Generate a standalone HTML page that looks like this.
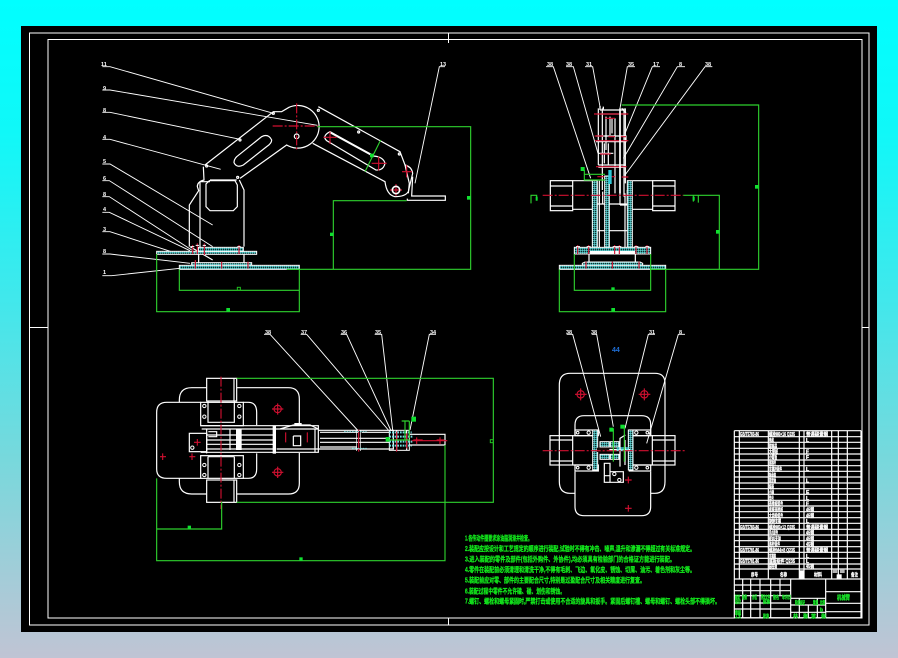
<!DOCTYPE html>
<html lang="zh">
<head>
<meta charset="utf-8">
<title>CAD</title>
<style>
html,body{margin:0;padding:0;width:898px;height:658px;overflow:hidden;background:linear-gradient(180deg,#00ffff 0%,#10f8f8 20%,#40e8ec 45%,#78d8dc 70%,#a4ccd8 88%,#c0c4d4 100%)}
svg{position:absolute;left:0;top:0;display:block}
.w{fill:none;stroke:#fff;stroke-width:3.6}
.t{fill:none;stroke:#fff;stroke-width:2.8}
.g{fill:none;stroke:#2ed02e;stroke-width:3.4}
.r{fill:none;stroke:#d01030;stroke-width:3.4}
.d{fill:none;stroke:#d01030;stroke-width:3.4;stroke-dasharray:30 6 6 6}
.gs{fill:#10e030}
.h{fill:url(#hatch);stroke:#fff;stroke-width:3}
.n{font-family:"Liberation Sans","Noto Sans CJK SC",sans-serif;font-size:5.5px;font-weight:bold;fill:#fff}
.note{font-family:"Liberation Sans","Noto Sans CJK SC",sans-serif;font-size:7px;font-weight:bold;fill:#12e81c;stroke:#12e81c;stroke-width:.3}
.c{font-family:"Liberation Sans","Noto Sans CJK SC",sans-serif;font-size:5px;font-weight:bold;fill:#fff;stroke:#fff;stroke-width:.3}
.cg{font-family:"Liberation Sans","Noto Sans CJK SC",sans-serif;font-size:5px;font-weight:bold;fill:#18e028;stroke:#18e028;stroke-width:.35}
</style>
</head>
<body>
<svg width="898" height="658" viewBox="0 0 898 658" xmlns="http://www.w3.org/2000/svg">
<defs>
<pattern id="hatch" width="6" height="6" patternUnits="userSpaceOnUse">
<rect width="6" height="6" fill="#3c9c9c"/>
<rect x="0" y="0" width="3" height="3" fill="#60c8c8"/>
<rect x="3" y="3" width="3" height="3" fill="#102c2c"/>
</pattern>
</defs>
<rect x="21" y="26" width="856" height="606" fill="#000"/>
<rect x="29.5" y="33" width="839.5" height="592" fill="none" stroke="#fff" stroke-width="1"/>
<rect x="48" y="39.500" width="814" height="578.500" fill="none" stroke="#fff" stroke-width="1"/>
<path d="M448.500 33V43M448.500 618V625M29.500 327.500H48M862 327.500H869" stroke="#fff" stroke-width="1" fill="none"/>

<!-- SIDE VIEW -->
<g transform="translate(90,50) scale(.33333)">
<path class="t" d="M37 50H60L550 190M37 120H60L682 226M37 187H60L450 268M37 268H60L392 358M37 342H60L368 525M37 392H58L368 590M37 440H58L305 600M37 487H58L300 602M37 545H60L250 607M37 612H60L300 640M37 677H65L270 655M1065 50H1048L975 400"/>
<path class="w" d="M345 345L550 185H575L597 172A64 64 0 1 1 590 285L450 385"/>
<path class="w" d="M440 320L515 260Q535 250 545 270Q545 280 530 290L460 345Q440 355 432 338Q432 328 440 320Z"/>
<circle class="w" cx="620" cy="259" r="7"/>
<circle class="w" cx="550" cy="190" r="3"/><circle class="w" cx="450" cy="270" r="3"/><circle class="w" cx="350" cy="348" r="3"/><circle class="w" cx="443" cy="382" r="3"/><circle class="w" cx="685" cy="181" r="3"/><circle class="w" cx="806" cy="246" r="3"/><circle class="w" cx="928" cy="312" r="3"/>
<path class="w" d="M685 170L930 305L945 345Q965 350 968 370L955 425Q945 440 915 440Q890 435 885 395L668 280"/>
<path class="w" d="M945 345L958 400L955 430M720 245L850 318Q880 320 885 340Q880 362 858 360L710 272Q695 258 720 245Z"/>
<path d="M722 248L845 315" stroke="#fff" stroke-width="6" fill="none"/>
<path class="w" d="M968 380L965 438H1066V451H952V446"/>
<path class="w" d="M340 350L342 390Q322 395 322 410L326 422L298 465V590M330 395H360M330 395V600M448 390L462 420V590M440 390H360"/>
<path class="w" d="M358 392H435L442 405V470L430 482H360L348 470V402Z"/>
<path class="w" d="M326 612V640M462 612V640M368 630L300 590"/>
<rect class="h" x="200" y="604" width="300" height="9"/>
<rect class="h" x="325" y="592" width="135" height="12"/>
<rect class="h" x="305" y="638" width="180" height="12"/>
<rect class="h" x="268" y="646" width="360" height="12"/>
<path class="r" d="M308 585V612M322 580V612M343 580V615M447 585V612M316 630V656M395 635V656M474 635V656"/>
<path d="M303 590H313M317 586H327M338 586H348M442 590H452" stroke="#fff" stroke-width="3" fill="none"/>
<path class="d" d="M620 160V300M548 228H684"/>
<path class="r" d="M700 262H740M720 245V282M845 340H890M866 320V362M936 365H966M950 345V382M900 420H936M918 402V438"/>
<circle cx="918" cy="420" r="11" fill="none" stroke="#fff" stroke-width="5"/>
<path class="g" d="M682 230H1142V658H590M730 658V452H950M268 658V721H628V658M200 612V785H628V658M872 270L825 365"/>
<rect class="gs" x="1131" y="438" width="11" height="11"/><rect class="gs" x="720" y="548" width="10" height="10"/><rect class="gs" x="409" y="774" width="11" height="11"/><rect class="gs" x="840" y="311" width="11" height="11"/>
<rect x="442" y="712" width="9" height="9" fill="none" stroke="#20c020" stroke-width="3"/>
</g>
<g class="n">
<text x="101" y="66">11</text><text x="103" y="90">9</text><text x="103" y="112">8</text><text x="103" y="139">4</text><text x="103" y="163">5</text><text x="103" y="180">6</text><text x="103" y="196">8</text><text x="103" y="211">4</text><text x="103" y="231">3</text><text x="103" y="253">8</text><text x="103" y="274">1</text><text x="440" y="66">13</text>
</g>

<!-- FRONT VIEW -->
<g transform="translate(520,50) scale(.33333)">
<path class="t" d="M78 50H100L212 385M138 50H160L234 310M195 50H218L240 170M345 50H322L300 175M420 50H397L315 250M495 50H472L310 325M577 50H555L315 375"/>
<path class="w" d="M235 175V345M247 175V420M258 200V300M270 200V255M285 205V430M300 175V465M312 175V440M316 175V400M240 180H312V192H240M228 258H318V275H228M235 345H316V352H235M235 310H280M300 465H322V420M238 420V462M248 425V462M265 280V345M276 205V250M253 280V340"/>
<path d="M240 168V180M250 170V178M305 175L318 188" stroke="#fff" stroke-width="4" fill="none"/>
<path class="r" d="M222 192H325M255 205H285M224 258H250M265 260H285M300 260H318M225 272H325M240 312H272M228 350H320M232 380H285M305 381H325"/>
<path d="M300 175V430" stroke="#fff" stroke-width="5" fill="none"/>
<rect class="w" x="91" y="392" width="67" height="90"/><path class="w" d="M91 408H158M91 468H158M158 392H220M158 478H220M338 392H398M338 478H398"/>
<rect class="w" x="398" y="392" width="67" height="90"/><path class="w" d="M398 408H465M398 468H465"/>
<rect class="h" x="217" y="392" width="15" height="212"/>
<rect class="h" x="254" y="378" width="14" height="226"/>
<rect class="h" x="322" y="392" width="15" height="212"/>
<path class="w" d="M232 462H254M268 462H322M232 542H254M268 542H322M238 392V598M315 430V598"/>
<rect x="265" y="360" width="10" height="42" fill="#30c8d8"/>
<rect class="h" x="163" y="592" width="229" height="20"/>
<rect x="210" y="603" width="135" height="10" fill="#fff"/>
<path class="w" d="M207 612V636M346 612V636"/>
<path class="h" d="M187 648V640L195 636H360L368 640V648Z"/>
<rect class="h" x="118" y="646" width="319" height="12"/>
<path class="r" d="M173 585V612M206 585V612M284 585V612M298 585V612M348 585V612M381 585V612M198 635V656M277 635V656M357 635V656"/>
<path d="M168 590H180M200 590H212M278 590H304M343 590H355M376 590H388" stroke="#fff" stroke-width="3" fill="none"/>
<path class="d" d="M68 436H490"/>
<path class="g" d="M305 165H716V658H392M490 436H598V658M163 612V721H392V612M118 658V785H437V658M193 360V392M193 373H255M193 390H255M33 460V436H50V452M520 436V455M535 436V458"/>
<rect class="gs" x="47" y="440" width="6" height="12"/><rect class="gs" x="518" y="440" width="6" height="12"/>
<rect class="gs" x="705" y="405" width="11" height="11"/><rect class="gs" x="588" y="540" width="11" height="11"/><rect class="gs" x="274" y="712" width="10" height="9"/><rect class="gs" x="274" y="774" width="11" height="11"/><rect class="gs" x="182" y="351" width="12" height="12"/>
</g>
<g class="n">
<text x="547" y="66">38</text><text x="566" y="66">38</text><text x="586" y="66">31</text><text x="628" y="66">35</text><text x="653" y="66">17</text><text x="679" y="66">8</text><text x="705" y="66">38</text>
</g>

<!-- TOP VIEW -->
<g transform="translate(140,325) scale(.33333)">
<path class="t" d="M372 28H390L655 318M482 28H500L745 315M602 28H620L752 315M704 28H725L758 315M888 28H868L810 315"/>
<path class="w" d="M182 232H80Q50 232 50 262V432Q50 460 80 460H182M310 232H325Q350 232 350 262V300M310 460H325Q350 460 350 432V385"/>
<path class="w" d="M118 232V225Q118 188 155 188H200M290 188H445Q478 188 478 222V302M478 384V475Q478 507 445 507H290M200 507H155Q118 507 118 470V460"/>
<rect class="w" x="200" y="160" width="90" height="68"/><rect class="w" x="200" y="465" width="90" height="67"/>
<path class="w" d="M282 160V228M282 465V532"/>
<rect class="w" x="182" y="232" width="128" height="70"/><rect class="w" x="182" y="392" width="128" height="68"/>
<path class="w" d="M204 228V292H283V228M204 395V460M283 395V460M204 395H283"/>
<g fill="none" stroke="#fff" stroke-width="3"><circle cx="193" cy="243" r="5"/><circle cx="193" cy="275" r="5"/><circle cx="298" cy="243" r="5"/><circle cx="298" cy="275" r="5"/><circle cx="193" cy="420" r="5"/><circle cx="193" cy="450" r="5"/><circle cx="298" cy="420" r="5"/><circle cx="298" cy="450" r="5"/><circle cx="157" cy="368" r="5"/></g>
<circle class="r" cx="413" cy="252" r="11"/><circle class="r" cx="413" cy="442" r="11"/>
<path class="r" d="M396 252H430M413 235V269M396 442H430M413 425V459M60 395H78M68 385V405M148 395H166M156 385V405M162 352H182M172 342V362"/>
<rect class="w" x="148" y="325" width="52" height="55"/>
<path class="w" d="M182 302H535V382H182M185 312H535M200 330H400M200 345H400M200 358H400M200 372H400M410 372H535M200 312V385M205 320H230V335H205M270 312V375"/>
<rect x="288" y="312" width="17" height="63" fill="#fff"/><rect x="398" y="302" width="10" height="84" fill="#fff"/>
<path class="w" d="M420 312L460 300H510L535 312M460 333H482V362H460V333M525 312V382"/>
<rect x="463" y="294" width="22" height="9" fill="#fff"/>
<path class="r" d="M437 322V352M502 322V352"/>
<path class="w" d="M535 316H760V372H535M540 322H655M665 322H750M540 340H750M540 352H750M540 366H650"/>
<path class="r" d="M656 314V380"/><path d="M650 316V378M662 316V378" stroke="#fff" stroke-width="2" fill="none"/>
<path d="M612 320H680M636 370H680" stroke="#7fe0e0" stroke-width="3" stroke-dasharray="5 3" fill="none"/>
<rect x="748" y="316" width="60" height="60" fill="none" stroke="#fff" stroke-width="3"/>
<path d="M748 322H815M748 335H820M748 350H820M748 362H815" stroke="#70e0e0" stroke-width="6" stroke-dasharray="5 3" fill="none"/>
<path class="w" d="M808 328H915V360H808M770 316V376M800 316V376"/>
<path class="r" d="M770 320V380M800 325V370M815 347H922M830 337V357M900 337V357M820 345H848M890 345H912"/>
<path class="d" d="M243 155V552"/>
<path class="g" d="M290 160H1060V532H290M50 460V707H915V360M50 612H245V530M785 288H808M795 288V345M808 288V340M745 345H810"/>
<rect class="gs" x="814" y="275" width="14" height="15"/><rect class="gs" x="737" y="336" width="12" height="14"/><rect class="gs" x="143" y="602" width="10" height="10"/><rect class="gs" x="478" y="697" width="10" height="10"/>
<rect x="1051" y="344" width="9" height="9" fill="none" stroke="#20c020" stroke-width="3"/>
</g>
<g class="n">
<text x="265" y="334">38</text><text x="301" y="334">37</text><text x="341" y="334">36</text><text x="375" y="334">35</text><text x="430" y="334">34</text>
</g>

<!-- SECTION VIEW -->
<g transform="translate(530,325) scale(.33333)">
<path class="t" d="M110 28H128L212 335M185 28H200L250 305M375 28H355L285 310M465 28H445L350 355"/>
<path class="w" d="M135 505H120Q88 505 88 470V180Q88 145 120 145H375Q405 145 405 175V470Q405 505 375 505H362"/>
<path class="w" d="M135 330V300Q135 272 162 272H335Q362 272 362 298V330M135 440V545Q135 572 162 572H335Q362 572 362 545V440"/>
<rect class="w" x="60" y="332" width="68" height="88"/><path class="w" d="M60 345H128M60 408H128M128 332H195M128 420H195M298 332H367M298 420H367"/>
<rect class="w" x="367" y="332" width="68" height="88"/><path class="w" d="M367 345H435M367 408H435"/>
<rect class="w" x="135" y="315" width="70" height="17"/><rect class="w" x="135" y="420" width="70" height="18"/><rect class="w" x="298" y="315" width="64" height="17"/><rect class="w" x="298" y="420" width="64" height="18"/>
<g fill="none" stroke="#fff" stroke-width="3"><circle cx="143" cy="323" r="4"/><circle cx="176" cy="323" r="5"/><circle cx="143" cy="428" r="4"/><circle cx="176" cy="428" r="5"/><circle cx="319" cy="323" r="5"/><circle cx="352" cy="323" r="4"/><circle cx="319" cy="428" r="5"/><circle cx="352" cy="428" r="4"/><circle cx="253" cy="447" r="5"/><circle cx="268" cy="465" r="5"/></g>
<rect class="h" x="188" y="315" width="15" height="120"/><rect class="h" x="295" y="315" width="14" height="120"/>
<rect class="h" x="210" y="350" width="28" height="16"/><rect class="h" x="241" y="350" width="26" height="16"/><rect class="h" x="210" y="388" width="28" height="15"/><rect class="h" x="241" y="388" width="26" height="15"/>
<path d="M198 375H300" stroke="#fff" stroke-width="7" fill="none"/>
<rect x="200" y="368" width="38" height="13" fill="#1a0606"/><rect x="260" y="366" width="36" height="12" fill="#40d8e0" opacity=".7"/>
<path class="w" d="M270 425V340L286 330M285 420V345"/>
<path class="w" d="M223 415H240V472H223ZM240 440H280V472H240M223 452H240"/>
<path class="r" d="M38 377H465" stroke-dasharray="30 6 6 6"/>
<circle class="r" cx="152" cy="208" r="11"/><circle class="r" cx="343" cy="208" r="11"/>
<path class="r" d="M135 208H170M152 190V226M326 208H361M343 190V226M285 465H305M295 455V475M285 550H305M295 540V560"/>
<path class="g" d="M250 310V410M283 300V410"/>
<rect class="gs" x="238" y="308" width="12" height="12"/><rect class="gs" x="271" y="299" width="12" height="12"/>
</g>
<g class="n">
<text x="566" y="334">38</text><text x="591" y="334">38</text><text x="649" y="334">31</text><text x="679" y="334">8</text>
</g>
<text x="612" y="352" font-family="Liberation Sans,sans-serif" font-size="7" font-weight="bold" fill="#2070d8">44</text>

<!-- NOTES -->
<g class="note">
<text x="465" y="540.5" textLength="67" lengthAdjust="spacingAndGlyphs">1.各传动件圈要求涂油脂润滑并检查。</text>
<text x="465" y="551" textLength="230" lengthAdjust="spacingAndGlyphs">2.装配应按设计和工艺规定的顺序进行装配,试验时不得有冲击、噪声,温升和渗漏不得超过有关标准规定。</text>
<text x="465" y="561.500" textLength="210" lengthAdjust="spacingAndGlyphs">3.进入装配的零件及部件(包括外购件、外协件),均必须具有检验部门的合格证方能进行装配。</text>
<text x="465" y="572" textLength="230" lengthAdjust="spacingAndGlyphs">4.零件在装配前必须清理和清洗干净,不得有毛刺、飞边、氧化皮、锈蚀、切屑、油污、着色剂和灰尘等。</text>
<text x="465" y="582.500" textLength="180" lengthAdjust="spacingAndGlyphs">5.装配前应对零、部件的主要配合尺寸,特别是过盈配合尺寸及相关精度进行复查。</text>
<text x="465" y="593.500" textLength="100" lengthAdjust="spacingAndGlyphs">6.装配过程中零件不允许磕、碰、划伤和锈蚀。</text>
<text x="465" y="603.500" textLength="255" lengthAdjust="spacingAndGlyphs">7.螺钉、螺栓和螺母紧固时,严禁打击或使用不合适的旋具和扳手。紧固后螺钉槽、螺母和螺钉、螺栓头部不得损坏。</text>
</g>

<!-- TITLE TABLE -->
<g transform="translate(730,425) scale(.33333)">
<path class="w" d="M13 17H393M13 35H393M13 52H393M13 70H393M13 87H393M13 105H393M13 122H393M13 139H393M13 156H393M13 174H393M13 191H393M13 208H393M13 226H393M13 243H393M13 260H393M13 278H393M13 295H393M13 313H393M13 330H393M13 347H393M13 365H393M13 382H393M13 400H393M13 417H393M13 432H393M13 462H393"/>
<path class="w" d="M13 17V578M28 17V462M115 17V462M208 17V462M222 17V462M305 17V462M325 17V462M352 17V462M393 17V578"/>
<path class="w" d="M13 480H182M13 497H182M13 512H182M13 534H182M13 552H182M13 578H393M38 462V578M62 462V578M90 462V578M122 462V578M150 462V510M182 462V578M287 462V578M287 500H393M287 535H393M287 560H393M182 520H287M182 540H287M182 562H287M208 520V578M235 540V578M262 520V578"/>
<rect x="208" y="436" width="14" height="26" fill="#fff"/><rect x="320" y="448" width="15" height="14" fill="#fff"/>
<rect x="308" y="434" width="14" height="10" fill="#fff" opacity=".7"/><rect x="330" y="434" width="14" height="10" fill="#fff" opacity=".7"/>
</g>
<g class="c">
<text x="740" y="436" textLength="19" lengthAdjust="spacingAndGlyphs">GB/T5783-86</text><text x="769" y="436" textLength="26" lengthAdjust="spacingAndGlyphs">螺栓M6×16 Q235</text><text x="806" y="436" textLength="22" lengthAdjust="spacingAndGlyphs">普通碳素钢</text>
<text x="769" y="442" textLength="5" lengthAdjust="spacingAndGlyphs">电机</text><text x="806" y="442" textLength="3">L</text>
<text x="769" y="448" textLength="8" lengthAdjust="spacingAndGlyphs">联轴器</text>
<text x="769" y="453.500" textLength="9" lengthAdjust="spacingAndGlyphs">大臂板</text><text x="806" y="453.500" textLength="4">F</text>
<text x="769" y="459" textLength="8" lengthAdjust="spacingAndGlyphs">小臂板</text><text x="806" y="459" textLength="4">F</text>
<text x="769" y="465" textLength="7" lengthAdjust="spacingAndGlyphs">连接杆</text>
<text x="769" y="471" textLength="13" lengthAdjust="spacingAndGlyphs">支撑杆组件</text><text x="806" y="471" textLength="3">L</text>
<text x="769" y="477" textLength="7" lengthAdjust="spacingAndGlyphs">轴承座</text>
<text x="769" y="482.500" textLength="7" lengthAdjust="spacingAndGlyphs">固定轴</text><text x="806" y="482.500" textLength="3">L</text>
<text x="769" y="488.500" textLength="5" lengthAdjust="spacingAndGlyphs">端盖</text>
<text x="769" y="494" textLength="5" lengthAdjust="spacingAndGlyphs">小轴</text><text x="806" y="494" textLength="3">E</text>
<text x="769" y="500" textLength="5" lengthAdjust="spacingAndGlyphs">垫片</text><text x="806" y="500" textLength="3">L</text>
<text x="769" y="505.500" textLength="14" lengthAdjust="spacingAndGlyphs">连接板组件</text><text x="806" y="505.500" textLength="3">F</text>
<text x="769" y="511.500" textLength="14" lengthAdjust="spacingAndGlyphs">底座连接板</text><text x="806" y="511.500" textLength="8" lengthAdjust="spacingAndGlyphs">45钢</text>
<text x="769" y="517.500" textLength="14" lengthAdjust="spacingAndGlyphs">大齿轮组件</text><text x="806" y="517.500" textLength="8" lengthAdjust="spacingAndGlyphs">45钢</text>
<text x="769" y="523" textLength="12" lengthAdjust="spacingAndGlyphs">旋转支撑</text><text x="806" y="523" textLength="3">L</text>
<text x="740" y="529" textLength="19" lengthAdjust="spacingAndGlyphs">GB/T5783-86</text><text x="769" y="529" textLength="26" lengthAdjust="spacingAndGlyphs">螺栓M5×12 Q235</text><text x="806" y="529" textLength="22" lengthAdjust="spacingAndGlyphs">普通碳素钢</text>
<text x="769" y="534.500" textLength="9" lengthAdjust="spacingAndGlyphs">手爪组件</text><text x="806" y="534.500" textLength="8" lengthAdjust="spacingAndGlyphs">45钢</text>
<text x="769" y="540.500" textLength="12" lengthAdjust="spacingAndGlyphs">舵机支架</text><text x="806" y="540.500" textLength="8" lengthAdjust="spacingAndGlyphs">45钢</text>
<text x="769" y="546" textLength="11" lengthAdjust="spacingAndGlyphs">连杆组件</text><text x="806" y="546" textLength="8" lengthAdjust="spacingAndGlyphs">45钢</text>
<text x="740" y="552" textLength="19" lengthAdjust="spacingAndGlyphs">GB/T5781-86</text><text x="769" y="552" textLength="26" lengthAdjust="spacingAndGlyphs">螺栓M4×8 Q235</text><text x="806" y="552" textLength="22" lengthAdjust="spacingAndGlyphs">普通碳素钢</text>
<text x="769" y="558" textLength="7" lengthAdjust="spacingAndGlyphs">支撑座</text><text x="806" y="558" textLength="3">L</text>
<text x="740" y="563" textLength="19" lengthAdjust="spacingAndGlyphs">GB/T5781-86</text><text x="769" y="563" textLength="26" lengthAdjust="spacingAndGlyphs">底板组件 Q235</text><text x="806" y="563" textLength="3">L</text>
<text x="769" y="568" textLength="8" lengthAdjust="spacingAndGlyphs">圆柱销</text><text x="806" y="568" textLength="8" lengthAdjust="spacingAndGlyphs">45钢</text>
<text x="751" y="576.500" textLength="7" lengthAdjust="spacingAndGlyphs">序号</text><text x="780" y="576.500" textLength="7" lengthAdjust="spacingAndGlyphs">名称</text><text x="814" y="576.500" textLength="8" lengthAdjust="spacingAndGlyphs">材料</text><text x="851" y="576.500" textLength="7" lengthAdjust="spacingAndGlyphs">备注</text>
</g>
<g class="cg">
<text x="735" y="599" textLength="5" lengthAdjust="spacingAndGlyphs">标记</text><text x="742" y="599" textLength="5" lengthAdjust="spacingAndGlyphs">处数</text><text x="752" y="599" textLength="5" lengthAdjust="spacingAndGlyphs">分区</text><text x="761" y="599" textLength="9" lengthAdjust="spacingAndGlyphs">更改文件</text><text x="773" y="599" textLength="6" lengthAdjust="spacingAndGlyphs">签名</text><text x="782" y="599" textLength="9" lengthAdjust="spacingAndGlyphs">年月日</text>
<text x="735" y="603.500" textLength="6" lengthAdjust="spacingAndGlyphs">设计</text><text x="763" y="603.500" textLength="7" lengthAdjust="spacingAndGlyphs">标准</text>
<text x="735" y="614.500" textLength="6" lengthAdjust="spacingAndGlyphs">审核</text><text x="735" y="618" textLength="6" lengthAdjust="spacingAndGlyphs">工艺</text><text x="763" y="618" textLength="6" lengthAdjust="spacingAndGlyphs">批准</text>
<text x="795" y="604.500" textLength="10" lengthAdjust="spacingAndGlyphs">阶段标记</text><text x="813" y="604.500" textLength="5" lengthAdjust="spacingAndGlyphs">重量</text><text x="820" y="604.500" textLength="5" lengthAdjust="spacingAndGlyphs">比例</text>
<text x="820" y="611.500" textLength="4">b</text>
<text x="793" y="618" textLength="3">共</text><text x="803" y="618" textLength="3">张</text><text x="811" y="618" textLength="3">第</text><text x="821" y="618" textLength="3">张</text>
<text x="837" y="599.500" textLength="13" lengthAdjust="spacingAndGlyphs" style="font-size:6.5px">机械臂</text>
</g>
</svg>
</body>
</html>
